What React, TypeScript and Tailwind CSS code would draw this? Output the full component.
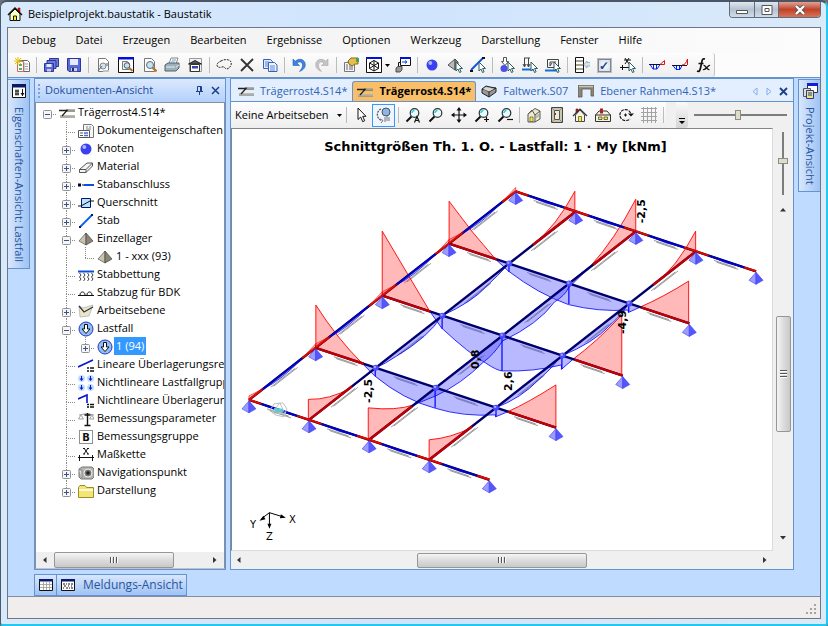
import React from "react";

const K = "#111";
const B = "#0a14d8";

const lens = (
  <>
    <path d="M6.5 9.5L1.5 14.5" stroke="#111" strokeWidth="2" />
    <circle cx="9.5" cy="6" r="4.3" fill="#e8fbff" stroke="#333" strokeWidth="1.2" />
    <path d="M7 6a2.5 2.5 0 012.5-2.5" stroke="#25d0e0" strokeWidth="1.6" fill="none" />
  </>
);

const pointer = (
  <path d="M9 5v9l2-2 1.5 3.5 1.6-.7L12.6 11.500H15.500z" fill="#fff" stroke="#2b5f63" strokeWidth="1" />
);

const sheet = (
  <path d="M3.500 1.500h7l3 3v10h-10z" fill="#fdfdfd" stroke="#777" />
);

const floppy = (
  <>
    <path d="M1.500 1.500h13v13H3L1.500 13z" fill="#5a6ad8" stroke="#2c3696" />
    <path d="M4 2h8v6H4z" fill="#e4eafa" />
    <path d="M4.500 10.500h7v4h-7z" fill="#c6d0ee" stroke="#2c3696" strokeWidth=".6" />
    <path d="M6 11h2v3H6z" fill="#20287c" />
  </>
);

const loadCase = (
  <>
    <circle cx="8" cy="8" r="7" fill="#8fc0f5" stroke="#2733c4" />
    <path d="M6.500 3.500h3V8H12l-4 4.500L4 8h2.500z" fill="#fff" stroke="#111" />
  </>
);

const beam = (
  <>
    <path d="M1 11.500h15" stroke="#8c8c86" strokeWidth="2.400" />
    <path d="M7 5.500h9" stroke="#6e6e68" strokeWidth="2.400" />
    <path d="M1 11h15M8 5h8" stroke="#cfcdbb" strokeWidth="1" />
    <path d="M0 5.500h8L3 11" stroke="#222" strokeWidth="1.300" />
  </>
);

const pyramid = (
  <>
    <path d="M8 2L1 10l7 4z" fill="#c9c4b0" stroke="#555" strokeWidth=".7" />
    <path d="M8 2l7 8-7 4z" fill="#8a8576" stroke="#444" strokeWidth=".7" />
  </>
);

const icons: Record<string, React.ReactNode> = {
  house: (
    <>
      <path d="M11 2h2v4h-2z" fill="#e01010" stroke="#a00" strokeWidth=".6" />
      <path d="M3 8v6.500h10V8L8 3z" fill="#ffffc8" stroke="#111" />
      <path d="M1 9l7-7 7 7" fill="none" stroke="#111" strokeWidth="1.500" />
      <path d="M6.500 10h3v4.500h-3z" fill="#ffee20" stroke="#111" />
    </>
  ),
  newDoc: (
    <>
      <path d="M5.500 3.500h8l2 2v9h-10z" fill="#fff" stroke="#666" />
      <path d="M10 5v9M11 7h3M11 9.500h3M11 12h3" stroke="#999" />
      <path d="M3.500 4.500h6v10h-6z" fill="#fff" stroke="#c46a6a" />
      <path d="M5 7h3v2H5zM5 11h3v2H5z" fill="#59b04c" />
      <path d="M4 0v8M0 4h8M1 1l6 6M7 1L1 7" stroke="#e6c400" strokeWidth="1" />
    </>
  ),
  saveAll: (
    <>
      <path d="M6.500 1.500h9v8h-9z" fill="#6f7ddc" stroke="#2c3696" />
      <path d="M4 3.500h9v8H4z" fill="#6f7ddc" stroke="#2c3696" />
      <path d="M1.500 6.500h9v8h-9z" fill="#5a6ad8" stroke="#2c3696" />
      <path d="M3.500 7h5v3h-5z" fill="#e4eafa" />
      <path d="M4 12h4v2.500H4z" fill="#c6d0ee" />
    </>
  ),
  save: floppy,
  docGear: (
    <>
      {sheet}
      <circle cx="8" cy="9" r="3" fill="#cfe6ea" stroke="#888" />
      <path d="M3 14l4-5M12 6v3" stroke="#678" strokeWidth="1.200" />
      <path d="M8 13h6v2H8z" fill="#bcc7c9" />
    </>
  ),
  previewBig: (
    <>
      <path d="M.5 .5h15v15H.5z" fill="#fff" stroke="#111" />
      <path d="M0 0h16v2.500H0z" fill="#0010e0" />
      <path d="M4.500 4.500h5l2 2v6h-7z" fill="#f4f4f4" stroke="#777" />
      <circle cx="9" cy="8.500" r="2.800" fill="#bfe6f0" stroke="#556" />
      <path d="M11 10.500l3.500 3.500" stroke="#b0742a" strokeWidth="2" />
    </>
  ),
  preview: (
    <>
      {sheet}
      <circle cx="9" cy="8" r="3.500" fill="#bfe6f0" stroke="#667" />
      <path d="M11.500 10.500l4 4" stroke="#b0742a" strokeWidth="2.300" />
    </>
  ),
  printer: (
    <>
      <path d="M5 7l2-6h7l-2 6z" fill="#fff" stroke="#888" />
      <path d="M1 8l3-2h11v5l-3 3H1z" fill="#9bb0b8" stroke="#50626a" />
      <path d="M2 10h9M12 10l3-2" stroke="#e8f1f4" />
      <path d="M8 3h4M7 5h4" stroke="#7a9ac0" />
    </>
  ),
  archive: (
    <>
      <path d="M2.500 1.500h12v13h-12z" fill="#f2f2f2" stroke="#999" />
      <path d="M1.500 7L8 3.500 14.500 7z" fill="#556" stroke="#222" />
      <path d="M3.500 7.500h9v7h-9z" fill="#fff" stroke="#333" />
      <path d="M5 9h6v2.500H5z" fill="#3a48a8" />
    </>
  ),
  lasso: (
    <path d="M5 4c3-2 9-2 10 1s-1 6-4 7c-2 .5-2-3-5-2-3 1-5 0-5-2s2-3 4-4" fill="none" stroke="#222" strokeDasharray="2 1" />
  ),
  cross: <path d="M2 2l12 12M14 2L2 14" stroke="#333" strokeWidth="1.800" />,
  copy: (
    <>
      <path d="M1.500 2.500h7l2 2v7h-9z" fill="#dfeaff" stroke="#3b5fb8" />
      <path d="M6.500 5.500h6l2.500 2.500v6.500H6.500z" fill="#eff4ff" stroke="#3b5fb8" />
      <path d="M8 9h5M8 11h5M8 13h5M3 5h4M3 7h3M3 9h3" stroke="#5f86d8" />
    </>
  ),
  undo: (
    <path d="M2 2v6.500h6.500L6 6c3-2.500 6-.5 5.500 3-.3 2-1.500 3.500-3 5.500 4-1.500 6-4 5.800-7C14 2.500 8.500.5 4.200 4.200z" fill="#3f83e0" stroke="#2760b8" strokeWidth=".6" />
  ),
  redo: (
    <path d="M14 2v6.500H7.500L10 6C7 3.500 4 5.500 4.500 9c.3 2 1.500 3.500 3 5.500-4-1.500-6-4-5.800-7C2 2.500 7.500.5 11.800 4.200z" fill="#c4c4c4" stroke="#aaa" strokeWidth=".6" />
  ),
  props: (
    <>
      <path d="M1.500 5.500h10v9h-10z" fill="#f5f5f5" stroke="#777" />
      <path d="M3 8h2M3 10h2M3 12h2M6 8h4M6 10h4M6 12h4" stroke="#667" />
      <path d="M5 4l3-3h7v6h-3L9 9 6 7z" fill="#e4be4e" stroke="#8a6a1a" />
      <path d="M13 1h3v4h-3z" fill="#49a050" />
    </>
  ),
  cube: (
    <>
      <path d="M.5 .5h15v15H.5z" fill="#fff" stroke="#111" />
      <path d="M0 0h16v2H0z" fill="#0010e0" />
      <path d="M8 3.500l4.500 2.500v5.500L8 14l-4.500-2.500V6zM8 3.500V14M3.500 6L8 8.500 12.500 6M3.500 11.500L8 8.500l4.500 3" fill="none" stroke="#111" />
    </>
  ),
  windowLink: (
    <>
      <path d="M5.500 .5h10v8h-10z" fill="#fff" stroke="#111" />
      <path d="M5 0h11v2H5z" fill="#0010e0" />
      <path d="M7 5h5M10 3.500L12 5l-2 1.500" stroke="#0040ff" fill="none" />
      <path d="M3.500 10V5.500H5" stroke="#111" fill="none" />
      <path d="M1 11l2-1.500h4V13l-2 2H1z" fill="#999" stroke="#333" strokeWidth=".8" />
    </>
  ),
  ball: (
    <>
      <circle cx="8" cy="8" r="5.500" fill="#3a3ff0" />
      <circle cx="6.300" cy="6" r="2" fill="#a9b4ff" />
    </>
  ),
  pyramidPick: (
    <>
      <path d="M8 2L1 8l7 5z" fill="#bbb" stroke="#555" />
      <path d="M8 2l3 3v6l-3 2z" fill="#888" stroke="#555" />
      {pointer}
    </>
  ),
  linePick: (
    <>
      <path d="M1 13L13 1" stroke="#0a50e0" strokeWidth="1.800" />
      <path d="M0 14h3M12 1h3" stroke="#111" strokeWidth="2" />
      {pointer}
    </>
  ),
  nodeLoad: (
    <>
      <path d="M4.500 .5h3v4H9.500L6 8.500 2.500 4.500h2z" fill="#fff" stroke="#555" />
      <circle cx="5" cy="11.500" r="3.500" fill="#4b50e8" />
      {pointer}
    </>
  ),
  lineLoad: (
    <>
      <path d="M2.500 1v8M6.500 1v8M1 7l1.500 3L4 7M5 7l1.500 3L8 7M2 1h6" fill="none" stroke="#444" />
      <path d="M0 12.500h13" stroke="#0a70e0" strokeWidth="2" />
      {pointer}
    </>
  ),
  areaLoad: (
    <>
      <path d="M2.500 2.500h11v8h-11zM5 5h6M5 5v4l2-3" fill="none" stroke="#444" />
      <path d="M0 13.500h13" stroke="#0a70e0" strokeWidth="2" />
      {pointer}
    </>
  ),
  layers: (
    <>
      <path d="M1.500 .5h8v15h-8z" fill="#fff" stroke="#111" />
      <path d="M2 4h7M2 8h7M2 12h7" stroke="#a9a48c" strokeWidth="2" />
      <path d="M16 5.500h-3V4l-3 3.500L13 11V9h3" fill="#d5e6ee" stroke="#8aa5b5" strokeWidth=".8" />
    </>
  ),
  chainPick: (
    <>
      <path d="M0 10.500h15M2.500 8v5M9.500 8v5M5 1l4 6M9 1L5 7M4 3h7" stroke="#111" fill="none" />
      {pointer}
    </>
  ),
  moment: (
    <>
      <path d="M0 7.500h12" stroke="#111" />
      <path d="M1 7.500l3 4.500h4l3-4.500M4.500 8v4M7.500 8v4" fill="none" stroke="#0020ff" />
      <path d="M11 7.500L15.500 3.500v4z" fill="none" stroke="#e01010" />
    </>
  ),
  shear: (
    <>
      <path d="M0 8.500h15" stroke="#111" />
      <path d="M1 8.500l3 4h4l2-4M4.500 9v4M7.500 9v4" fill="none" stroke="#0020ff" />
      <path d="M10 8c3 0 4-2 5.500-6v6" fill="none" stroke="#e01010" />
    </>
  ),
  fx: (
    <>
      <path d="M2 14c2 1 3 0 3.500-3L7 4c.5-2 1.500-2.500 3-2M3.500 6.500h5" fill="none" stroke="#111" strokeWidth="1.700" />
      <path d="M8.500 8.500c2-1 3 5 6 4M15 8.500c-2-1-4 5-7 4" fill="none" stroke="#111" strokeWidth="1.300" />
    </>
  ),
  arrow: <path d="M5 1v11.500l2.700-2.500 2 4.700 2-1-2-4.400H13z" fill="#fff" stroke="#111" />,
  orbit: (
    <>
      <path d="M5 2C0 4 0 12 6 13.500" fill="none" stroke="#555" strokeDasharray="2 1" strokeWidth="1.300" />
      <circle cx="10" cy="5" r="4" fill="#8fb4e6" stroke="#456" />
      <path d="M4 12l3 1.500L5 16M9 10v5M11 9v5M13 10v4" stroke="#777" fill="none" />
    </>
  ),
  zoomA: (
    <>
      {lens}
      <path d="M9.500 15.500l2.500-6 2.500 6M10.500 13.500h3" fill="none" stroke="#111" strokeWidth="1.200" />
    </>
  ),
  zoom: lens,
  pan: (
    <>
      <path d="M8 1v14M1 8h14" stroke="#111" strokeWidth="1.200" />
      <path d="M8 0l2.500 3.500h-5zM8 16l2.500-3.500h-5zM0 8l3.500-2.500v5zM16 8l-3.500-2.500v5z" fill="#111" />
    </>
  ),
  zoomIn: (
    <>
      {lens}
      <path d="M12.500 10v5M10 12.500h5" stroke="#111" strokeWidth="1.200" />
    </>
  ),
  zoomOut: (
    <>
      {lens}
      <path d="M10 12.500h6" stroke="#111" strokeWidth="1.200" />
    </>
  ),
  house3d: (
    <>
      <path d="M2 7l7-5.500L14 4v8l-5 3H2z" fill="#ecebd0" stroke="#555" />
      <path d="M2 7l4-4 3 5v7M9 8l5-4" fill="none" stroke="#555" />
      <path d="M4 10h3v4.500H4z" fill="#ffee20" stroke="#555" strokeWidth=".7" />
      <path d="M10 8.500l3-2v3l-3 2z" fill="#bcbcae" />
    </>
  ),
  door: (
    <>
      <path d="M2.500 .5h11v15h-11z" fill="#c9c6ae" stroke="#444" />
      <path d="M5.500 3.500h5v9h-5z" fill="#eeedd8" stroke="#555" />
      <path d="M2.500 .5l3 3M13.500 .5l-3 3M2.500 15.500l3-3M13.500 15.500l-3-3" stroke="#777" strokeWidth=".7" />
      <path d="M6 6h1v2H6z" fill="#b22" />
    </>
  ),
  houseFront: (
    <>
      <path d="M4 2h2v4H4z" fill="#b02222" stroke="#711" strokeWidth=".6" />
      <path d="M3.500 8v6.500h9V8L8 3z" fill="#f5f4e2" stroke="#444" />
      <path d="M1 9l7-7 7 7" fill="none" stroke="#333" strokeWidth="1.200" />
      <path d="M6.500 9.500h3v5h-3z" fill="#ffee20" stroke="#444" strokeWidth=".7" />
    </>
  ),
  houseWide: (
    <>
      <path d="M.5 8L4 4h8l3.500 4v6.500H.5z" fill="#f5f4e2" stroke="#333" />
      <path d="M5 1.500h3v5H5z" fill="#b02222" />
      <path d="M.5 8h15" stroke="#333" />
      <path d="M3.500 10h3.500v2.500H3.500zM9 10h3.500v2.500H9z" fill="#ffee20" stroke="#333" strokeWidth=".7" />
    </>
  ),
  turn: (
    <>
      <path d="M12.500 6A5.500 5.500 0 108 13.500c2 0 3-.5 4-1.500" fill="none" stroke="#111" strokeWidth="1.200" strokeDasharray="3 1" />
      <path d="M10 6.500h6l-3 3z" fill="#111" />
      <path d="M6 8h3M7.500 6.500v3" stroke="#111" />
    </>
  ),
  grid: (
    <path d="M0 1.500h16M0 5.500h16M0 9.500h16M0 13.500h16M2.500 0v16M6.500 0v16M10.500 0v16M14.500 0v16" stroke="#a2a2a2" />
  ),
  beam,
  docProps: (
    <>
      <path d="M5.500 1.500h8l2 2v11h-10z" fill="#f6f6f6" stroke="#777" />
      <path d="M8 4h2M11 4h2M8 6h5" stroke="#888" />
      <path d="M.5 7.500h11v7H.5z" fill="#fff" stroke="#556" />
      <path d="M2 10h3M2 12.500h3" stroke="#556" />
      <path d="M6 10h4M6 12.500h4" stroke="#4a6cd0" strokeWidth="1.300" />
    </>
  ),
  eraser: (
    <>
      <path d="M1.500 10.500L9 4h5.500v3L8 13.500H1.500z" fill="#f4f4f4" stroke="#555" />
      <path d="M1.500 10.500H8L14.500 4M8 10.500v3" fill="none" stroke="#555" />
    </>
  ),
  joint: (
    <>
      <path d="M0 6.500h3v3H0z" fill="#003" />
      <path d="M4 8h2" stroke={K} />
      <path d="M6 8h10" stroke="#0a50e0" strokeWidth="2" />
    </>
  ),
  section: (
    <>
      <path d="M3.500 3.500h9v9h-9z" fill="#b9e2ff" stroke="#00147a" strokeWidth="1" />
      <path d="M0 11h3l9-5h4" stroke="#111" fill="none" />
    </>
  ),
  bar: (
    <>
      <path d="M2 14L14 2" stroke="#0a60f0" strokeWidth="1.800" />
      <path d="M1 13h2v2H1zM13 1h2v2h-2z" fill="#001a7a" />
    </>
  ),
  pyramid,
  bedding: (
    <>
      <path d="M0 4.500h16" stroke="#0a50e0" strokeWidth="2" />
      <path d="M1.500 6l1.500 2-1.500 2L3 12l-1.500 2M5.500 6L7 8l-1.500 2L7 12l-1.500 2M9.500 6L11 8l-1.500 2 1.500 2-1.500 2M13.500 6L15 8l-1.500 2 1.500 2-1.500 2" fill="none" stroke="#111" strokeWidth=".8" />
    </>
  ),
  bdk: (
    <path d="M0 10.500h16M2 10c0-4 5-4 5 0M9 10c0-4 5-4 5 0" fill="none" stroke="#111" />
  ),
  plane: (
    <>
      <path d="M1 3l4 2 10-3-4 11-9 1z" fill="#e9e6cc" stroke="#aaa" strokeWidth=".7" />
      <path d="M1 3l5 6 9-5" fill="none" stroke="#333" strokeWidth="1.200" />
    </>
  ),
  loadCase,
  linear: (
    <>
      <path d="M0 10L15 3" stroke={B} strokeWidth="1.600" />
      <path d="M9 11h2M12 11h4M9 14h2M12 14h4" stroke="#111" strokeWidth="1.600" />
    </>
  ),
  loadGroup: (
    <>
      <circle cx="3.500" cy="3.500" r="3.500" fill="#bfe0ff" />
      <circle cx="12.500" cy="3.500" r="3.500" fill="#bfe0ff" />
      <circle cx="3.500" cy="12.500" r="3.500" fill="#bfe0ff" />
      <circle cx="12.500" cy="12.500" r="3.500" fill="#bfe0ff" />
      <path d="M3.500 1v3M12.500 1v3M3.500 10v3M12.500 10v3" stroke={B} />
      <path d="M1.500 3.500l2 2.500 2-2.500zM10.500 3.500l2 2.500 2-2.500zM1.500 12.500l2 2.500 2-2.500zM10.500 12.500l2 2.500 2-2.500z" fill={B} />
    </>
  ),
  nonlinear: (
    <>
      <path d="M0 6l9-4v8" fill="none" stroke={B} strokeWidth="1.600" />
      <path d="M9 11.500h2M12 11.500h4M9 14h2M12 14h4" stroke="#111" strokeWidth="1.600" />
    </>
  ),
  scale: (
    <>
      <path d="M1 4l8-1.500L16 4M3 4L.5 8h5zM14 4l-2.500 4h4.500z" fill="none" stroke="#888" strokeWidth=".8" />
      <path d="M9.500 2v12M6.500 4h6M6.500 14.500h6" stroke="#111" strokeWidth="1.400" />
    </>
  ),
  group: (
    <>
      <path d="M1.500 1.500h13v13h-13z" fill="#fff" stroke="#222" strokeDasharray="1 1" />
      <text x="8" y="12" textAnchor="middle" fontSize="10" fontWeight="bold" fill="#111" fontFamily="DejaVu Sans, sans-serif">B</text>
    </>
  ),
  chain: (
    <path d="M0 10.500h16M1.500 8v6M14.500 8v6M6 1l4 6M10 1L6 7M5 1.500h2M9 1.500h2M5 7h2M9 7h2" fill="none" stroke="#111" />
  ),
  camera: (
    <>
      <path d="M1 4l3-2h10l2 2v8l-2 2H3l-2-2z" fill="#b4b4b0" stroke="#777" />
      <path d="M1 5h3v8" fill="#ddd" stroke="#888" />
      <circle cx="10" cy="8" r="4" fill="#777" stroke="#eee" />
      <circle cx="10" cy="8" r="1.800" fill="#222" />
    </>
  ),
  folder: (
    <>
      <path d="M.5 4.500l1.500-2h5l1.500 2h7v10H.5z" fill="#f3e477" stroke="#a08c20" />
      <path d="M1 7h14" stroke="#fffbd0" strokeWidth="2" />
    </>
  ),
  slab: (
    <>
      <path d="M1 6l4-3 4 1 6 1v4l-7 5-7-4z" fill="#999" stroke="#222" />
      <path d="M1 6l4 1 3 2 7-4M8 9v5" fill="none" stroke="#222" />
      <path d="M2 6l3-2 4 1 4 1-5 2.500z" fill="#d8d8d0" />
    </>
  ),
  portal: (
    <>
      <path d="M0 2.500h16V13h-3V6H4v8H0z" fill="#8a8778" stroke="#5a584e" strokeWidth=".8" />
      <path d="M1 3.500h14" stroke="#c8c5b4" strokeWidth="1.500" />
    </>
  ),
  settingsTab: (
    <>
      <path d="M1.500 1.500h13v13h-13z" fill="#fff" stroke="#111" />
      <path d="M1 1h14v3.500H1z" fill="#0a1a66" />
      <path d="M4 8h4M4 11h4M5 6.500v6M7 6.500v6M11.500 6v7" stroke="#111" fill="none" />
      <path d="M9.500 10h4l-2 3z" fill="#111" />
    </>
  ),
  projectTab: (
    <>
      <path d="M5.500 .5h10v9h-10z" fill="#fff" stroke="#334" />
      <path d="M5 0h11v3H5z" fill="#1020d8" />
      <path d="M1.500 5.500h7v8h-7z" fill="#ddd" stroke="#555" />
      <path d="M4.500 7.500h7v8h-7z" fill="#f2e27a" stroke="#223a99" />
      <path d="M6 10h4M6 12h4" stroke="#223a99" />
    </>
  ),
  tableTab: (
    <>
      <path d="M1.500 2.500h13v11h-13z" fill="#fff" stroke="#111" />
      <path d="M1 2h14v2.500H1z" fill="#0a1a66" />
      <path d="M5.500 5v8M8.500 5v8M11.500 5v8M2 7.500h12M2 10.500h12" stroke="#999" strokeWidth=".8" />
    </>
  ),
  messageTab: (
    <>
      <path d="M1.500 2.500h13v11h-13z" fill="#fff" stroke="#111" />
      <path d="M1 2h14v2.500H1z" fill="#0a1a66" />
      <path d="M3 7h2M6 7h1M8 7h2M11 7h2M4 9h2M8 9h1M11 9h1M3 11h1M6 11h2M9 11h1M11 11h2" stroke="#111" />
    </>
  ),
};

const Icon = ({ name }: { name: string }) => (
  <svg viewBox="0 0 16 16" className="h-4 w-4 shrink-0" fill="none" aria-hidden="true">
    {icons[name]}
  </svg>
);

const Separator = () => (
  <span className="flex w-[6px] shrink-0 justify-center">
    <span className="h-4 w-px bg-[#bcbcbc]" />
  </span>
);

const ToolButton = ({ name, active }: { name: string; active?: boolean }) => (
  <button
    type="button"
    aria-label={name}
    className={
      active
        ? "flex h-[23px] w-[23px] shrink-0 items-center justify-center border border-[#3399ff] bg-[#eef5fd]"
        : "flex h-[23px] w-[23px] shrink-0 items-center justify-center"
    }
  >
    <Icon name={name} />
  </button>
);

const menuItems = ["Debug", "Datei", "Erzeugen", "Bearbeiten", "Ergebnisse", "Optionen", "Werkzeug", "Darstellung", "Fenster", "Hilfe"];

const mainTools = [
  ["newDoc"],
  ["saveAll", "save"],
  ["docGear", "previewBig", "preview", "printer", "archive"],
  ["lasso", "cross", "copy"],
  ["undo", "redo"],
  ["props", "cube", "windowLink"],
  ["ball", "pyramidPick", "linePick"],
  ["nodeLoad", "lineLoad", "areaLoad"],
  ["layers", "check", "chainPick"],
  ["moment", "shear", "fx"],
];

const TitleBar = () => (
  <header className="flex h-[25px] shrink-0 items-start justify-between">
    <div className="flex items-center gap-[5px] pt-1 text-[11px] leading-4 text-black">
      <Icon name="house" />
      <h1>Beispielprojekt.baustatik - Baustatik</h1>
    </div>
    <div className="flex h-4 overflow-hidden rounded-b-[4px] border border-t-0 border-[#5f6d7e]">
      <button type="button" aria-label="Minimieren" className="flex w-[25px] items-center justify-center border-r border-[#5f6d7e] bg-linear-to-b from-[#dfe7f0] via-[#b6c2d0] to-[#d0dcea]">
        <svg viewBox="0 0 12 10" className="h-[10px] w-3">
          <path d="M.5 5.500h11v3H.5z" fill="#fff" stroke="#555" />
        </svg>
      </button>
      <button type="button" aria-label="Maximieren" className="flex w-[24px] items-center justify-center border-r border-[#5f6d7e] bg-linear-to-b from-[#dfe7f0] via-[#b6c2d0] to-[#d0dcea]">
        <svg viewBox="0 0 12 10" className="h-[10px] w-3">
          <path d="M1 .5h10v9H1zM4 3.500h4v3H4z" fill="#fff" stroke="#555" />
        </svg>
      </button>
      <button type="button" aria-label="Schließen" className="flex w-[41px] items-center justify-center bg-linear-to-b from-[#e0a193] via-[#c0412a] to-[#d87355]">
        <svg viewBox="0 0 12 10" className="h-[10px] w-3">
          <path d="M2 1l8 8M10 1L2 9" stroke="#555" strokeWidth="4" />
          <path d="M2 1l8 8M10 1L2 9" stroke="#fff" strokeWidth="2.400" />
        </svg>
      </button>
    </div>
  </header>
);

const MainToolbar = () => (
  <div className="flex h-6 shrink-0 bg-[#fcfcfc]">
    <div className="flex items-center rounded-r-[3px] border-r border-[#c4c4c4] bg-linear-to-b from-[#fdfdfd] to-[#eeeeee] pl-[2px]">
      {mainTools.map((group, g) => (
        <React.Fragment key={g}>
          {g > 0 && <Separator />}
          {group.map((name) =>
            name === "check" ? (
              <label key={name} className="flex w-[23px] justify-center">
                <input
                  type="checkbox"
                  aria-label="Auswahl"
                  defaultChecked
                  className="h-[13px] w-[13px] appearance-none border border-[#7f8792] bg-[#eaf0f7] bg-[radial-gradient(#fff,#cfdbe8)] text-[#24408e] outline-1 outline-[#bbb] before:block before:text-[12px] before:leading-[11px] before:font-bold before:content-['✓']"
                />
              </label>
            ) : (
              <React.Fragment key={name}>
                <ToolButton name={name} />
                {name === "cube" && (
                  <button type="button" aria-label="Ansicht wählen" className="flex w-[6px] justify-start">
                    <svg viewBox="0 0 5 3" className="h-[3px] w-[5px]">
                      <path d="M0 0h5L2.500 3z" />
                    </svg>
                  </button>
                )}
              </React.Fragment>
            )
          )}
        </React.Fragment>
      ))}
    </div>
  </div>
);

type Row = { label: string; icon: string; depth: number; box?: "+" | "-"; selected?: boolean };

const rows: Row[] = [
  { label: "Trägerrost4.S14*", icon: "beam", depth: 0, box: "-" },
  { label: "Dokumenteigenschaften", icon: "docProps", depth: 1 },
  { label: "Knoten", icon: "ball", depth: 1, box: "+" },
  { label: "Material", icon: "eraser", depth: 1, box: "+" },
  { label: "Stabanschluss", icon: "joint", depth: 1, box: "+" },
  { label: "Querschnitt", icon: "section", depth: 1, box: "+" },
  { label: "Stab", icon: "bar", depth: 1, box: "+" },
  { label: "Einzellager", icon: "pyramid", depth: 1, box: "-" },
  { label: "1 - xxx (93)", icon: "pyramid", depth: 2 },
  { label: "Stabbettung", icon: "bedding", depth: 1 },
  { label: "Stabzug für BDK", icon: "bdk", depth: 1 },
  { label: "Arbeitsebene", icon: "plane", depth: 1, box: "+" },
  { label: "Lastfall", icon: "loadCase", depth: 1, box: "-" },
  { label: "1 (94)", icon: "loadCase", depth: 2, box: "+", selected: true },
  { label: "Lineare Überlagerungsregel", icon: "linear", depth: 1 },
  { label: "Nichtlineare Lastfallgruppe", icon: "loadGroup", depth: 1 },
  { label: "Nichtlineare Überlagerung", icon: "nonlinear", depth: 1 },
  { label: "Bemessungsparameter", icon: "scale", depth: 1 },
  { label: "Bemessungsgruppe", icon: "group", depth: 1 },
  { label: "Maßkette", icon: "chain", depth: 1 },
  { label: "Navigationspunkt", icon: "camera", depth: 1, box: "+" },
  { label: "Darstellung", icon: "folder", depth: 1, box: "+" },
];

// One 19px cell of the tree: dotted connector lines and the +/- box
const Branch = ({ box, stub, up, down }: { box?: "+" | "-"; stub?: boolean; up?: boolean; down?: boolean }) => (
  <svg viewBox="0 0 19 18" className="h-[18px] w-[19px] shrink-0" aria-hidden="true">
    <g stroke="#8a8a8a" strokeDasharray="1 1">
      {up && <path d="M9.500 0v11" />}
      {down && <path d="M9.500 11v7" />}
      {stub && <path d="M9 11.500h10" />}
    </g>
    {box && (
      <>
        <rect x="5.500" y="7.500" width="8" height="8" rx="1" fill="#f6f6f6" stroke="#919191" />
        <path d={box === "+" ? "M7 11.500h5M9.500 9v5" : "M7 11.500h5"} stroke="#3b4f8f" />
      </>
    )}
  </svg>
);

const Tree = () => (
  <ul role="tree" className="min-h-0 flex-1 overflow-hidden pl-[2px]">
    {rows.map((row, i) => (
      <li key={i} role="treeitem" aria-selected={!!row.selected} className="flex h-[18px] items-center">
        {row.depth > 0 && <span className="w-[19px] shrink-0" />}
        {row.depth === 2 && <Branch up down />}
        {row.box ? (
          <button type="button" aria-label={`${row.label} umschalten`} className="shrink-0">
            <Branch box={row.box} stub up={row.depth > 0} down={row.depth === 1 && i < rows.length - 1} />
          </button>
        ) : (
          <Branch stub up down={row.depth === 1} />
        )}
        <span className="flex w-[19px] shrink-0 justify-center pt-[2px]">
          <Icon name={row.icon} />
        </span>
        <span
          className={
            row.selected
              ? "bg-[#3399ff] px-[2px] leading-[18px] whitespace-nowrap text-white"
              : "px-[2px] leading-[18px] whitespace-nowrap"
          }
        >
          {row.label}
        </span>
      </li>
    ))}
  </ul>
);

const Chevron = ({ d }: { d: string }) => (
  <svg viewBox="0 0 8 8" className="h-2 w-2" aria-hidden="true">
    <path d={d} fill="#333" />
  </svg>
);

const thumbH = "flex items-center justify-center gap-[1px] rounded-[2px] border border-[#979797] bg-linear-to-b from-[#f5f5f5] via-[#dcdcdc] to-[#c9c9c9]";

const Grip = () => (
  <>
    <i className="h-[6px] w-[2px] border-l border-[#555] bg-white" />
    <i className="h-[6px] w-[2px] border-l border-[#555] bg-white" />
    <i className="h-[6px] w-[2px] border-l border-[#555] bg-white" />
  </>
);

const DocumentPanel = () => (
  <section className="flex w-[192px] shrink-0 flex-col border border-[#6593cf] bg-white">
    <div className="flex h-[23px] shrink-0 items-center gap-[5px] bg-linear-to-b from-[#dce9fd] to-[#b2d0fb] px-[3px] text-[#1f4e9e]">
      <span className="h-[14px] border-l-2 border-dotted border-[#7ba4dc]" />
      <h2 className="flex-1 text-[11px]">Dokumenten-Ansicht</h2>
      <button type="button" aria-label="Anheften">
        <svg viewBox="0 0 9 9" className="h-[9px] w-[9px]">
          <path d="M2.500 5V.5h4V5M1 5.500h7M4.500 6v3M5.500 1v4" fill="none" stroke="#1a3f8c" />
        </svg>
      </button>
      <button type="button" aria-label="Ansicht schließen" className="px-[2px]">
        <svg viewBox="0 0 9 9" className="h-[9px] w-[9px]">
          <path d="M1 1l7 7M8 1L1 8" stroke="#1a3f8c" strokeWidth="1.500" />
        </svg>
      </button>
    </div>
    <div className="flex min-h-0 flex-1 flex-col border border-[#8a9099] border-b-[#c0c4ca]">
      <Tree />
      <div className="flex h-4 shrink-0 bg-[#efefef]">
        <button type="button" aria-label="Nach links" className="flex w-[18px] items-center justify-center">
          <Chevron d="M5.500 1v6L2 4z" />
        </button>
        <span className={`${thumbH} w-[120px]`}>
          <Grip />
        </span>
        <span className="flex-1" />
        <button type="button" aria-label="Nach rechts" className="flex w-[18px] items-center justify-center">
          <Chevron d="M2 1v6l3.500-3z" />
        </button>
      </div>
    </div>
  </section>
);

const node = (i: number, j: number): [number, number] => [250 + 60.2 * i + 66.8 * j, 400 + 20 * i - 52.2 * j];

const mix = (a: [number, number], b: [number, number], t: number, dy = 0) =>
  `${(a[0] + (b[0] - a[0]) * t).toFixed(1)},${(a[1] + (b[1] - a[1]) * t + dy).toFixed(1)}`;

const steps = [0, 1, 2, 3];
const all = [0, 1, 2, 3, 4];

const Support = ({ x, y }: { x: number; y: number }) => (
  <g stroke="#3c3cf0" strokeWidth=".6">
    <path d={`M${x} ${y + 1}l-7 8 7 4z`} fill="#9c9cff" />
    <path d={`M${x} ${y + 1}l7 8-7 4z`} fill="#5656ff" />
  </g>
);

// Edge beams: small fixed-end moments in red, field moments in blue
const EdgeSpan = ({ a, b, rise }: { a: [number, number]; b: [number, number]; rise: number }) => (
  <>
    <path d={`M${mix(a, b, 0)}L${mix(a, b, 1)}`} stroke="#000" strokeWidth="2.400" />
    <path d={`M${mix(a, b, 0.2)}Q${mix(a, b, 0.5, rise + 2)} ${mix(a, b, 0.8)}z`} fill="#4646ff" fillOpacity=".4" stroke="#0000ff" strokeWidth=".7" />
    <path d={`M${mix(a, b, 0.2)}L${mix(a, b, 0.8)}`} stroke="#0000d0" strokeWidth="1.800" />
    <path d={`M${mix(a, b, 0)}L${mix(a, b, 0.2)}M${mix(a, b, 0.8)}L${mix(a, b, 1)}`} stroke="#d80000" strokeWidth="2" />
    <path d={`M${mix(a, b, 0)}L${mix(a, b, 0, -rise)}L${mix(a, b, 0.22)}M${mix(a, b, 0.8)}L${mix(a, b, 1, -rise)}V${b[1]}`} fill="#ff4040" fillOpacity=".35" stroke="#f00" strokeWidth=".6" />
  </>
);

const Hatch = ({ a, b, dx }: { a: [number, number]; b: [number, number]; dx: number }) => {
  const p: [number, number] = [a[0] + dx, a[1]];
  const q: [number, number] = [b[0] + dx, b[1]];
  return (
    <path
      d={`M${mix(p, q, 0.3, 3)}L${mix(p, q, 0.66, 3)}M${mix(p, q, 0.34, 4)}L${mix(p, q, 0.7, 4)}`}
      stroke="#555"
      strokeWidth=".6"
    />
  );
};

// Bending moment areas drawn on the axes of the inner beams
const redAreas = [
  "M317 348V305Q338 338 363 363z",
  "M383.500 296V231L431 311z",
  "M450.500 244V201Q472 231 497 259z",
  "M557.500 428V385Q531 402 509 412z",
  "M623.500 375V315Q597 343 575 359z",
  "M690.500 323V281Q665 297 642 307z",
  "M309.500 420V399.500Q331 400 352 388z",
  "M369.500 440V408Q398 411 415 405z",
  "M430.500 460V440Q453 438 472 428z",
  "M576.500 212V191Q558 226 535 244z",
  "M637.500 232V199Q616 240 593 265z",
  "M697.500 252V231Q678 268 656 284z",
];

const blueAreas = [
  "M363 363L376 376Q405 400 437 408.500Q465 417 497 415L497 417L509 412z",
  "M431 311L443 328Q471 354 487 363Q499 371 504 371Q535 372 563 365V369.500L575 359z",
  "M497 259L510 271Q540 294 570 304.500Q600 312 630 310V312.500L642 307z",
  "M352 388L377 368Q386 364 398 356Q430 337 443 316Q475 301 487 287Q500 275 510 264L535 244z",
  "M415 405L437 396Q463 384 485 362Q495 355 504 341Q540 324 556 302Q567 295 570 288L593 265z",
  "M472 428L497 408Q523 398 540 380Q552 370 563 356Q595 343 612 325Q624 315 630 304L656 284z",
];

const MomentDiagram = () => (
  <svg viewBox="233 129 541 421" className="h-full w-full" fill="none" role="img" aria-label="Schnittgrößen My">
    <text x="497" y="151" textAnchor="middle" fontSize="13" fontWeight="bold" fill="#000" fontFamily="DejaVu Sans, sans-serif">
      Schnittgrößen Th. 1. O. - Lastfall: 1 · My [kNm]
    </text>

    {all.map((k) =>
      steps.map((s) => (
        <React.Fragment key={`${k}-${s}`}>
          <Hatch a={node(s, k)} b={node(s + 1, k)} dx={0} />
          {k < 4 && <Hatch a={node(k, s)} b={node(k, s + 1)} dx={2} />}
        </React.Fragment>
      ))
    )}

    {blueAreas.map((d) => (
      <path key={d} d={d} fill="#4646ff" fillOpacity=".38" stroke="#0000ff" strokeWidth=".8" />
    ))}
    {redAreas.map((d) => (
      <path key={d} d={d} fill="#ff3c3c" fillOpacity=".36" stroke="#f00" strokeWidth=".9" />
    ))}

    {[1, 2, 3].map((k) => (
      <React.Fragment key={k}>
        <path d={`M${mix(node(0, k), node(4, k), 0)}L${mix(node(0, k), node(4, k), 1)}`} stroke="#00006c" strokeWidth="2.400" />
        <path d={`M${mix(node(0, k), node(4, k), 0)}L${mix(node(0, k), node(4, k), 0.2)}M${mix(node(0, k), node(4, k), 0.8)}L${mix(node(0, k), node(4, k), 1)}`} stroke="#c00000" strokeWidth="2.400" />
        <path d={`M${mix(node(k, 0), node(k, 4), 0)}L${mix(node(k, 0), node(k, 4), 1)}`} stroke="#00006c" strokeWidth="2.400" />
        <path d={`M${mix(node(k, 0), node(k, 4), 0)}L${mix(node(k, 0), node(k, 4), 0.16)}M${mix(node(k, 0), node(k, 4), 0.84)}L${mix(node(k, 0), node(k, 4), 1)}`} stroke="#c00000" strokeWidth="2.400" />
      </React.Fragment>
    ))}

    {steps.map((s) => (
      <React.Fragment key={s}>
        <EdgeSpan a={node(0, s)} b={node(0, s + 1)} rise={4} />
        <EdgeSpan a={node(s, 0)} b={node(s + 1, 0)} rise={1} />
        <EdgeSpan a={node(s, 4)} b={node(s + 1, 4)} rise={1} />
      </React.Fragment>
    ))}

    <path d="M376.500 367v9M436.500 388v20M497.500 408v9M443.500 316v13M503.500 336v35M563.500 356v13M510.500 264v8M570.500 284v20M630.500 304v8" stroke="#0000ff" strokeWidth="1.200" />
    {[1, 2, 3].map((i) =>
      [1, 2, 3].map((j) => {
        const [x, y] = node(i, j);
        return (
          <g key={`${i}${j}`}>
            <circle cx={x} cy={y} r="3" fill="#4a4aff" />
            <circle cx={x - 0.8} cy={y - 0.8} r="1.200" fill="#9d9dff" />
          </g>
        );
      })
    )}

    {all.map((k) => (
      <React.Fragment key={k}>
        <Support x={node(0, k)[0]} y={node(0, k)[1]} />
        <Support x={node(4, k)[0]} y={node(4, k)[1]} />
        {k > 0 && k < 4 && (
          <>
            <Support x={node(k, 0)[0]} y={node(k, 0)[1]} />
            <Support x={node(k, 4)[0]} y={node(k, 4)[1]} />
          </>
        )}
      </React.Fragment>
    ))}

    <path d="M275 404l9-1 4 6-3 8-9-2-4-6zM273 413l8-10 5 11z" stroke="#b8c4c4" />
    <path d="M275 408l9 1v4l-8-1z" fill="#5fc9cf" />

    <g fill="#000" fontSize="11" fontWeight="bold" fontFamily="DejaVu Sans, sans-serif">
      <text transform="translate(647 223) rotate(-90)">-2,5</text>
      <text transform="translate(628 334) rotate(-90)">-4,9</text>
      <text transform="translate(480 369) rotate(-90)">0,8</text>
      <text transform="translate(514 391) rotate(-90)">2,6</text>
      <text transform="translate(373 403) rotate(-90)">-2,5</text>
    </g>

    <path d="M270.500 513v13M270.500 513l13 4M270.500 513l-8 6" stroke="#000" />
    <path d="M268.500 524h4l-2 5zM282 514.500l5 3.500-6 .5zM264.500 516l-4 5 6-1.500z" fill="#000" />
    <g fill="#000" fontSize="10" fontFamily="DejaVu Sans, sans-serif">
      <text x="251" y="528">Y</text>
      <text x="290" y="523">X</text>
      <text x="267" y="540">Z</text>
    </g>
  </svg>
);

const tabs = [
  { label: "Trägerrost4.S14*", icon: "beam" },
  { label: "Trägerrost4.S14*", icon: "beam", active: true },
  { label: "Faltwerk.S07", icon: "slab" },
  { label: "Ebener Rahmen4.S13*", icon: "portal" },
];

const DocumentTabs = () => (
  <div role="tablist" className="flex h-[23px] shrink-0 items-end border-b border-[#6593cf] bg-[#e3eefe] pl-[2px] text-[11px] text-[#3065b5]">
    {tabs.map((tab, i) => (
      <button
        key={i}
        type="button"
        role="tab"
        aria-selected={!!tab.active}
        className={
          tab.active
            ? "flex h-5 shrink-0 items-center gap-[6px] rounded-t-[3px] border border-b-0 border-[#6593cf] bg-[#f9bf68] px-[4px] font-bold whitespace-nowrap text-black"
            : "flex h-5 shrink-0 items-center gap-[6px] px-[5px] whitespace-nowrap"
        }
      >
        <Icon name={tab.icon} />
        {tab.label}
      </button>
    ))}
    <div className="ml-auto flex h-5 items-center gap-[6px] pr-[5px]">
      <button type="button" aria-label="Vorherige">
        <svg viewBox="0 0 8 9" className="h-[9px] w-2">
          <path d="M6 1v7L2 4.500z" fill="none" stroke="#86aee6" />
        </svg>
      </button>
      <button type="button" aria-label="Nächste">
        <svg viewBox="0 0 8 9" className="h-[9px] w-2">
          <path d="M2 1v7l4-3.500z" fill="none" stroke="#86aee6" />
        </svg>
      </button>
      <button type="button" aria-label="Dokument schließen">
        <svg viewBox="0 0 9 9" className="h-[9px] w-[9px]">
          <path d="M1 1l7 7M8 1L1 8" stroke="#1a3f8c" strokeWidth="1.800" />
        </svg>
      </button>
    </div>
  </div>
);

const ViewToolbar = () => (
  <div className="flex h-[26px] shrink-0 items-center bg-[#f0f0f0]">
    <div className="flex h-full items-center bg-linear-to-b from-[#fdfdfd] to-[#eeeeee] pl-1">
      <label className="flex w-[108px] items-center gap-1">
        <select aria-label="Arbeitsebene" className="w-[98px] appearance-none bg-transparent text-[11px] text-black">
          <option>Keine Arbeitseben</option>
        </select>
        <svg viewBox="0 0 5 3" className="h-[3px] w-[5px]">
          <path d="M0 0h5L2.500 3z" />
        </svg>
      </label>
      <Separator />
      <ToolButton name="arrow" />
      <ToolButton name="orbit" active />
      <Separator />
      <ToolButton name="zoomA" />
      <ToolButton name="zoom" />
      <ToolButton name="pan" />
      <ToolButton name="zoomIn" />
      <ToolButton name="zoomOut" />
      <Separator />
      <ToolButton name="house3d" />
      <ToolButton name="door" />
      <ToolButton name="houseFront" />
      <ToolButton name="houseWide" />
      <ToolButton name="turn" />
      <ToolButton name="grid" />
      <Separator />
    </div>
    <button type="button" aria-label="Weitere Schaltflächen" className="ml-[10px] flex h-full w-3 shrink-0 items-end justify-center rounded-r-[3px] bg-linear-to-b from-[#fafafa] to-[#d4d4d4] pb-1">
      <svg viewBox="0 0 6 6" className="h-[6px] w-[6px]">
        <path d="M0 0h6v1H0zM0 3h6L3 6z" />
      </svg>
    </button>
    <input
      type="range"
      aria-label="Zoom"
      defaultValue={47}
      className="mx-[6px] h-4 min-w-0 flex-1 appearance-none bg-[linear-gradient(#7d7d7d,#7d7d7d)] bg-[length:100%_2px] bg-center bg-no-repeat [&::-webkit-slider-thumb]:h-[10px] [&::-webkit-slider-thumb]:w-[6px] [&::-webkit-slider-thumb]:appearance-none [&::-webkit-slider-thumb]:border [&::-webkit-slider-thumb]:border-[#8f8d80] [&::-webkit-slider-thumb]:bg-[#dedccb]"
    />
  </div>
);

const DocumentView = () => (
  <section className="flex min-w-0 flex-1 flex-col border border-[#6593cf] bg-[#f0f0f0]">
    <DocumentTabs />
    <ViewToolbar />
    <div className="flex min-h-0 flex-1">
      <div className="min-w-0 flex-1 border border-[#858585] border-r-[#dcdcdc] border-b-[#dcdcdc] bg-white">
        <MomentDiagram />
      </div>
      <div className="flex w-5 shrink-0 flex-col items-center pb-1">
        <input
          type="range"
          aria-label="Überhöhung"
          defaultValue={46}
          className="mt-1 h-[63px] w-4 appearance-none bg-[linear-gradient(#7d7d7d,#7d7d7d)] bg-[length:2px_100%] bg-center bg-no-repeat [writing-mode:vertical-lr] [&::-webkit-slider-thumb]:h-[6px] [&::-webkit-slider-thumb]:w-[10px] [&::-webkit-slider-thumb]:appearance-none [&::-webkit-slider-thumb]:border [&::-webkit-slider-thumb]:border-[#8f8d80] [&::-webkit-slider-thumb]:bg-[#dedccb]"
        />
        <button type="button" aria-label="Nach oben" className="mt-[6px] flex h-[18px] w-4 items-center justify-center">
          <Chevron d="M1 5.500h6L4 2z" />
        </button>
        <span className="flex-1" />
        <span className="flex h-[116px] w-[15px] flex-col items-center justify-center gap-[1px] rounded-[2px] border border-[#979797] bg-linear-to-r from-[#f5f5f5] via-[#dcdcdc] to-[#c9c9c9]">
          <i className="h-[2px] w-[7px] border-t border-[#555] bg-white" />
          <i className="h-[2px] w-[7px] border-t border-[#555] bg-white" />
          <i className="h-[2px] w-[7px] border-t border-[#555] bg-white" />
        </span>
        <span className="flex-1" />
        <button type="button" aria-label="Nach unten" className="flex h-[18px] w-4 items-center justify-center">
          <Chevron d="M1 2h6L4 5.500z" />
        </button>
      </div>
    </div>
    <div className="flex h-[18px] shrink-0 items-center pr-5">
      <button type="button" aria-label="Nach links" className="flex w-4 items-center justify-center">
        <Chevron d="M5.500 1v6L2 4z" />
      </button>
      <span className="flex-1" />
      <span className={`${thumbH} h-[15px] w-[170px]`}>
        <Grip />
      </span>
      <span className="flex-1" />
      <button type="button" aria-label="Nach rechts" className="flex w-4 items-center justify-center">
        <Chevron d="M2 1v6l3.500-3z" />
      </button>
    </div>
  </section>
);

const App = () => {
  return (
    <div className="h-screen bg-[#6f7275] font-['Open_Sans',sans-serif] text-[11px] text-black">
      <div className="flex h-full flex-col rounded-t-[7px] rounded-b-[3px] border-t-2 border-r-2 border-b-2 border-l border-t-[#4a5566] border-r-[#22c8f0] border-b-[#22c8f0] border-l-[#4a5a6e] bg-[#d0e4fb] bg-linear-to-r from-[#d8e9fb] via-[#cfe4fd] to-[#dbeaf9] pr-[5px] pb-[5px] pl-[6px]">
        <TitleBar />
        <div className="flex min-h-0 flex-1 flex-col border border-[#6d7787] bg-[#bfdbff]">
          <nav className="flex h-[25px] shrink-0 items-center gap-5 bg-linear-to-r from-[#f0f0f0] to-[#fcfcfc] pl-[14px]">
            {menuItems.map((item) => (
              <button key={item} type="button">
                {item}
              </button>
            ))}
          </nav>
          <MainToolbar />

          <main className="flex min-h-0 flex-1 gap-1 border-t border-[#6593cf]">
            <aside className="w-[22px] shrink-0 pt-[1px]">
              <button type="button" className="flex w-full flex-col items-center gap-2 border border-l-0 border-[#6593cf] bg-linear-to-r from-[#d8e7fd] to-[#9fc3f3] pt-[3px] pb-[6px] text-[11px] leading-[18px] text-[#2a55a0]">
                <Icon name="settingsTab" />
                <span className="[writing-mode:vertical-rl]">Eigenschaften-Ansicht: Lastfall</span>
              </button>
            </aside>

            <DocumentPanel />
            <DocumentView />

            <aside className="w-[22px] shrink-0 pt-[1px]">
              <button type="button" className="flex w-full flex-col items-center gap-2 border border-r-0 border-[#6593cf] bg-linear-to-r from-[#d8e7fd] to-[#9fc3f3] pt-[3px] pb-[6px] text-[11px] leading-[18px] text-[#2a55a0]">
                <Icon name="projectTab" />
                <span className="[writing-mode:vertical-rl]">Projekt-Ansicht</span>
              </button>
            </aside>
          </main>

          <div className="flex h-[26px] shrink-0 items-start pt-1 pl-[26px]">
            <button type="button" aria-label="Tabellen-Ansicht" className="flex h-[22px] w-[23px] items-center justify-center border border-[#6593cf] bg-linear-to-b from-[#d8e7fd] to-[#9fc3f3]">
              <Icon name="tableTab" />
            </button>
            <button type="button" className="flex h-[22px] items-center gap-[7px] border border-l-0 border-[#6593cf] bg-linear-to-b from-[#d8e7fd] to-[#9fc3f3] px-[3px] text-[12px] text-[#2a55a0]">
              <Icon name="messageTab" />
              Meldungs-Ansicht
            </button>
          </div>

          <footer className="flex h-[22px] shrink-0 items-end justify-end border-t border-[#7f8ea0] bg-[#f1edec] p-[3px]">
            <svg viewBox="0 0 11 11" className="h-[11px] w-[11px]" aria-hidden="true">
              <path d="M8 0h2v2H8zM8 4h2v2H8zM8 8h2v2H8zM4 4h2v2H4zM4 8h2v2H4zM0 8h2v2H0z" fill="#a7a3a2" />
            </svg>
          </footer>
        </div>
      </div>
    </div>
  );
};

export default App;
